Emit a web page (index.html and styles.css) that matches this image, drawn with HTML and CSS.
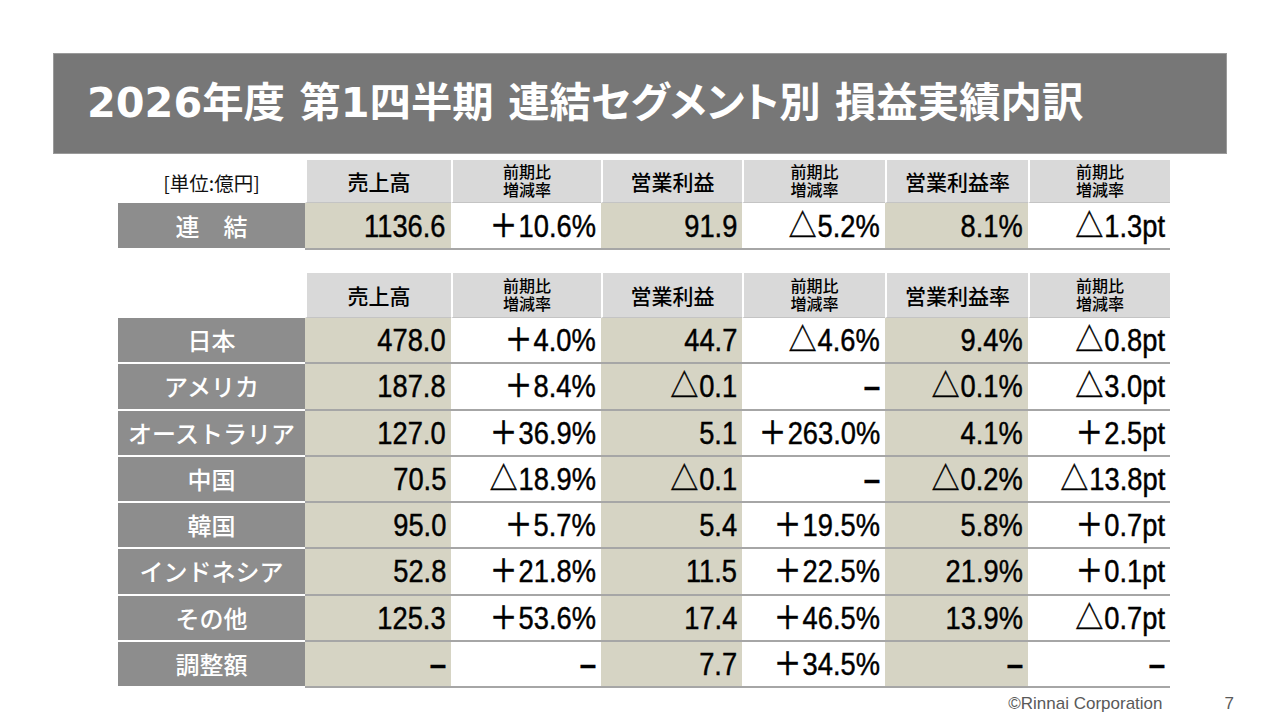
FILE: index.html
```html
<!DOCTYPE html>
<html lang="ja">
<head>
<meta charset="utf-8">
<title>2026年度 第1四半期 連結セグメント別 損益実績内訳</title>
<link rel="stylesheet" href="styles.css">
</head>
<body>
<div class="slide">
  <header class="title-bar">
    <h1 class="title">2026年度 第1四半期 連結セグメント別 損益実績内訳</h1>
  </header>

  <section class="grid table-consolidated">
    <div class="hcell unit">[単位:億円]</div>
    <div class="hcell head">売上高</div>
    <div class="hcell head small"><span class="ln">前期比</span><span class="ln">増減率</span></div>
    <div class="hcell head">営業利益</div>
    <div class="hcell head small"><span class="ln">前期比</span><span class="ln">増減率</span></div>
    <div class="hcell head">営業利益率</div>
    <div class="hcell head small"><span class="ln">前期比</span><span class="ln">増減率</span></div>

    <div class="label">連　結</div>
    <div class="num beige"><span class="val">1136.6</span></div>
    <div class="num"><span class="val"><span class="sym">＋</span>10.6%</span></div>
    <div class="num beige"><span class="val">91.9</span></div>
    <div class="num"><span class="val"><span class="sym">△</span>5.2%</span></div>
    <div class="num beige"><span class="val">8.1%</span></div>
    <div class="num"><span class="val"><span class="sym">△</span>1.3pt</span></div>
  </section>

  <section class="grid table-segments">
    <div class="hcell blank"></div>
    <div class="hcell head">売上高</div>
    <div class="hcell head small"><span class="ln">前期比</span><span class="ln">増減率</span></div>
    <div class="hcell head">営業利益</div>
    <div class="hcell head small"><span class="ln">前期比</span><span class="ln">増減率</span></div>
    <div class="hcell head">営業利益率</div>
    <div class="hcell head small"><span class="ln">前期比</span><span class="ln">増減率</span></div>

    <div class="label">日本</div>
    <div class="num beige"><span class="val">478.0</span></div>
    <div class="num"><span class="val"><span class="sym">＋</span>4.0%</span></div>
    <div class="num beige"><span class="val">44.7</span></div>
    <div class="num"><span class="val"><span class="sym">△</span>4.6%</span></div>
    <div class="num beige"><span class="val">9.4%</span></div>
    <div class="num"><span class="val"><span class="sym">△</span>0.8pt</span></div>

    <div class="label">アメリカ</div>
    <div class="num beige"><span class="val">187.8</span></div>
    <div class="num"><span class="val"><span class="sym">＋</span>8.4%</span></div>
    <div class="num beige"><span class="val"><span class="sym">△</span>0.1</span></div>
    <div class="num"><span class="val dash">–</span></div>
    <div class="num beige"><span class="val"><span class="sym">△</span>0.1%</span></div>
    <div class="num"><span class="val"><span class="sym">△</span>3.0pt</span></div>

    <div class="label">オーストラリア</div>
    <div class="num beige"><span class="val">127.0</span></div>
    <div class="num"><span class="val"><span class="sym">＋</span>36.9%</span></div>
    <div class="num beige"><span class="val">5.1</span></div>
    <div class="num"><span class="val"><span class="sym">＋</span>263.0%</span></div>
    <div class="num beige"><span class="val">4.1%</span></div>
    <div class="num"><span class="val"><span class="sym">＋</span>2.5pt</span></div>

    <div class="label">中国</div>
    <div class="num beige"><span class="val">70.5</span></div>
    <div class="num"><span class="val"><span class="sym">△</span>18.9%</span></div>
    <div class="num beige"><span class="val"><span class="sym">△</span>0.1</span></div>
    <div class="num"><span class="val dash">–</span></div>
    <div class="num beige"><span class="val"><span class="sym">△</span>0.2%</span></div>
    <div class="num"><span class="val"><span class="sym">△</span>13.8pt</span></div>

    <div class="label">韓国</div>
    <div class="num beige"><span class="val">95.0</span></div>
    <div class="num"><span class="val"><span class="sym">＋</span>5.7%</span></div>
    <div class="num beige"><span class="val">5.4</span></div>
    <div class="num"><span class="val"><span class="sym">＋</span>19.5%</span></div>
    <div class="num beige"><span class="val">5.8%</span></div>
    <div class="num"><span class="val"><span class="sym">＋</span>0.7pt</span></div>

    <div class="label">インドネシア</div>
    <div class="num beige"><span class="val">52.8</span></div>
    <div class="num"><span class="val"><span class="sym">＋</span>21.8%</span></div>
    <div class="num beige"><span class="val">11.5</span></div>
    <div class="num"><span class="val"><span class="sym">＋</span>22.5%</span></div>
    <div class="num beige"><span class="val">21.9%</span></div>
    <div class="num"><span class="val"><span class="sym">＋</span>0.1pt</span></div>

    <div class="label">その他</div>
    <div class="num beige"><span class="val">125.3</span></div>
    <div class="num"><span class="val"><span class="sym">＋</span>53.6%</span></div>
    <div class="num beige"><span class="val">17.4</span></div>
    <div class="num"><span class="val"><span class="sym">＋</span>46.5%</span></div>
    <div class="num beige"><span class="val">13.9%</span></div>
    <div class="num"><span class="val"><span class="sym">△</span>0.7pt</span></div>

    <div class="label">調整額</div>
    <div class="num beige"><span class="val dash">–</span></div>
    <div class="num"><span class="val dash">–</span></div>
    <div class="num beige"><span class="val">7.7</span></div>
    <div class="num"><span class="val"><span class="sym">＋</span>34.5%</span></div>
    <div class="num beige"><span class="val dash">–</span></div>
    <div class="num"><span class="val dash">–</span></div>
  </section>

  <footer class="footer">
    <span class="copyright">©Rinnai Corporation</span>
    <span class="page-no">7</span>
  </footer>
</div>
</body>
</html>
```

FILE: styles.css
```css
* {
  box-sizing: border-box;
}

html, body {
  margin: 0;
  padding: 0;
  background: #ffffff;
}

.slide {
  width: 1280px;
  height: 720px;
  overflow: hidden;
  padding-top: 53px;
  font-family: "Noto Sans CJK JP", sans-serif;
  color: #000;
}

.title-bar {
  margin: 0 53px;
  height: 101px;
  background: #777777;
  border: 1px solid #9a9a9a;
  display: flex;
  align-items: center;
  padding-left: 33px;
}

.title {
  margin: 0;
  color: #ffffff;
  font-family: "DejaVu Sans", "Noto Sans CJK JP", sans-serif;
  font-weight: 700;
  font-size: 41.4px;
  line-height: 1;
  font-feature-settings: "palt";
  white-space: nowrap;
}

.grid {
  display: grid;
  grid-template-columns: 187px 146px 150px 141px 143px 143px 142px;
  margin-left: 118px;
}

.table-consolidated {
  margin-top: 6px;
  grid-template-rows: 43px 47px;
}

.table-segments {
  margin-top: 23px;
  grid-template-rows: 45px repeat(8, 46.25px);
}

.hcell {
  display: flex;
  align-items: center;
  justify-content: center;
  text-align: center;
}

.head {
  background: #d9d9d9;
  border-left: 2px solid #ffffff;
  border-bottom: 1px solid #c4c4c4;
  font-size: 21px;
  font-weight: 500;
  line-height: 1;
}

.head.small {
  flex-direction: column;
  font-size: 16px;
  padding-bottom: 2px;
}

.ln {
  display: block;
  height: 18px;
  line-height: 18px;
}

.unit {
  font-size: 19.5px;
  font-weight: 400;
  color: #111;
  padding-top: 2px;
}

.label {
  background: #8d8d8d;
  color: #ffffff;
  border-bottom: 2px solid #ffffff;
  display: flex;
  align-items: center;
  justify-content: center;
  font-size: 24px;
  font-weight: 500;
  line-height: 1;
  white-space: nowrap;
}

.num {
  background: #ffffff;
  border-bottom: 2px solid #a6a6a6;
  display: flex;
  align-items: center;
  justify-content: flex-end;
  padding-right: 5px;
  padding-top: 1px;
  font-family: "Liberation Sans", "Noto Sans CJK JP", sans-serif;
  font-size: 31px;
  line-height: 1;
  white-space: nowrap;
}

.num.beige {
  background: #d6d4c4;
}

.val {
  display: inline-block;
  line-height: 31px;
  transform: scaleX(0.88);
  transform-origin: right center;
  -webkit-text-stroke: 0.45px #000;
}

.val.dash {
  font-weight: 700;
  transform: scaleX(0.95);
}

.sym {
  font-family: "Noto Sans CJK JP", sans-serif;
  font-weight: 500;
  font-size: 32px;
  line-height: 0;
  -webkit-text-stroke: 0.3px #000;
  margin-right: 1px;
}

.footer {
  height: 32px;
  display: flex;
  justify-content: flex-end;
  align-items: center;
  gap: 62px;
  padding-right: 46px;
  font-family: "Liberation Sans", sans-serif;
  font-size: 17px;
  color: #595959;
}
```
